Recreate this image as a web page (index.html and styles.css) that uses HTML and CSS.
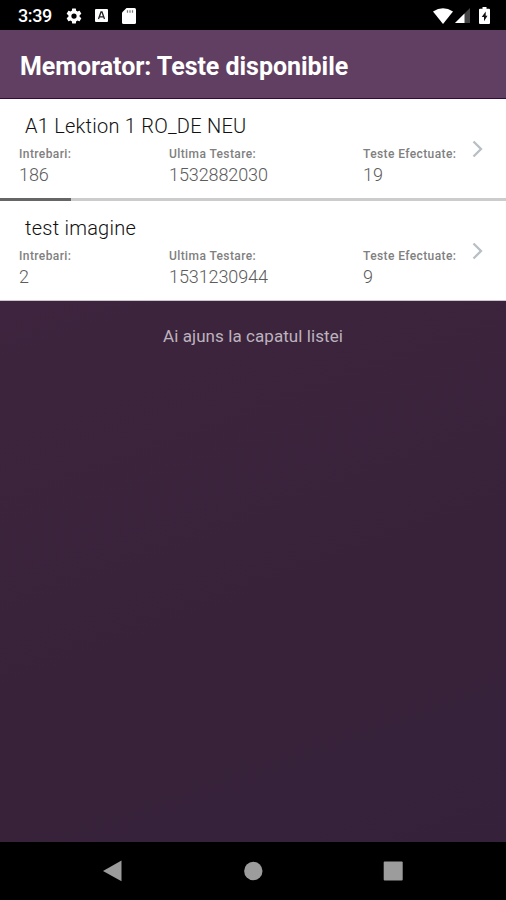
FILE: index.html
```html
<!DOCTYPE html>
<html lang="ro">
<head>
<meta charset="utf-8">
<title>Memorator</title>
<link rel="stylesheet" href="styles.css">
</head>
<body>
<div class="status">
  <span class="clock">3:39</span>
  <svg class="gear" width="18" height="18" viewBox="0 0 24 24"><path fill="#fff" fill-rule="evenodd" d="M19.43 12.98c.04-.32.07-.64.07-.98s-.03-.66-.07-.98l2.11-1.65c.19-.15.24-.42.12-.64l-2-3.46c-.12-.22-.39-.3-.61-.22l-2.49 1c-.52-.4-1.08-.73-1.69-.98l-.38-2.65A.49.49 0 0 0 14 2h-4c-.25 0-.46.18-.49.42l-.38 2.65c-.61.25-1.17.59-1.69.98l-2.49-1c-.23-.09-.49 0-.61.22l-2 3.46c-.13.22-.07.49.12.64l2.11 1.65c-.04.32-.07.65-.07.98s.03.66.07.98l-2.11 1.65c-.19.15-.24.42-.12.64l2 3.46c.12.22.39.3.61.22l2.49-1c.52.4 1.08.73 1.69.98l.38 2.65c.03.24.24.42.49.42h4c.25 0 .46-.18.49-.42l.38-2.65c.61-.25 1.17-.59 1.69-.98l2.49 1c.23.09.49 0 .61-.22l2-3.46c.12-.22.07-.49-.12-.64zM12 15.5a3.5 3.5 0 1 1 0-7 3.5 3.5 0 0 1 0 7z"/></svg>
  <svg class="keyboard" width="13" height="13" viewBox="0 0 13 13"><rect width="13" height="13" rx="1" fill="#fff"/><path d="M3.500 10 6 3h1l2.500 7M4.500 7.800h4" fill="none" stroke="#222" stroke-width="1.300"/></svg>
  <svg class="card" width="14" height="16" viewBox="0 0 14 16"><path fill="#fff" d="M4.500 0H12.500Q14 0 14 1.500V14.500Q14 16 12.500 16H1.500Q0 16 0 14.500V4.500z"/><path d="M5.500 2.200v2.500M8 2.200v2.500M10.500 2.200v2.500" stroke="#777" stroke-width="1.200"/></svg>
  <span class="spacer"></span>
  <svg class="wifi" width="20" height="16" viewBox="0 0 20 16"><path fill="#fff" d="M0 3.500Q10-3 20 3.500L10 16z"/></svg>
  <svg class="signal" width="15" height="15" viewBox="0 0 15 15"><path fill="#444" d="M15 0v15H0z"/><path fill="#fff" d="M9.500 5.500V15H0z"/></svg>
  <svg class="battery" width="11" height="17" viewBox="0 0 11 17"><path fill="#fff" d="M3.500 0h4v1.800H10q1 0 1 1V16q0 1-1 1H1q-1 0-1-1V2.800q0-1 1-1h2.500z"/><path fill="#111" d="M6.700 4.500 2.700 10H5v4.200l3.500-5.500H6.700z"/></svg>
</div>
<header class="header">Memorator: Teste disponibile</header>
<main class="list">
  <article class="row">
    <h2 class="title">A1 Lektion 1 RO_DE NEU</h2>
    <div class="stats">
      <div><div class="label">Intrebari:</div><div class="value">186</div></div>
      <div><div class="label">Ultima Testare:</div><div class="value">1532882030</div></div>
      <div><div class="label">Teste Efectuate:</div><div class="value">19</div></div>
    </div>
    <svg class="chevron" width="11" height="18" viewBox="0 0 11 18"><path d="M1.500 1.500 9 9l-7.500 7.500" fill="none" stroke="#b8bfc5" stroke-width="2.300"/></svg>
    <div class="progress"><div class="bar"></div></div>
  </article>
  <article class="row last">
    <h2 class="title">test imagine</h2>
    <div class="stats">
      <div><div class="label">Intrebari:</div><div class="value">2</div></div>
      <div><div class="label">Ultima Testare:</div><div class="value">1531230944</div></div>
      <div><div class="label">Teste Efectuate:</div><div class="value">9</div></div>
    </div>
    <svg class="chevron" width="11" height="18" viewBox="0 0 11 18"><path d="M1.500 1.500 9 9l-7.500 7.500" fill="none" stroke="#b8bfc5" stroke-width="2.300"/></svg>
  </article>
  <p class="end">Ai ajuns la capatul listei</p>
</main>
<nav class="nav">
  <svg width="20" height="22" viewBox="0 0 20 22"><path fill="#9c9c9c" d="M18.500 .5v20.800L0 11z"/></svg>
  <svg width="20" height="20" viewBox="0 0 20 20"><circle cx="10.300" cy="10" r="9.200" fill="#9c9c9c"/></svg>
  <svg width="20" height="20" viewBox="0 0 20 20"><rect x=".7" y=".5" width="19" height="19" rx="1" fill="#9c9c9c"/></svg>
</nav>
</body>
</html>
```
FILE: styles.css
```css
* { box-sizing: border-box; }
body {
  margin: 0;
  height: 900px;
  display: flex;
  flex-direction: column;
  font-family: Roboto, "Liberation Sans", sans-serif;
  background: #000;
  overflow: hidden;
}
.status {
  height: 30px;
  display: flex;
  align-items: center;
  padding: 1px 16px 0 18px;
  color: #fff;
}
.clock {
  width: 47px;
  font-size: 18px;
  font-weight: 500;
  line-height: 30px;
  letter-spacing: -0.4px;
}
.keyboard { margin-left: 12px; }
.card { margin-left: 14px; }
.spacer { flex: 1; }
.signal { margin-left: 2px; }
.battery { margin-left: 9px; }
.header {
  height: 69px;
  padding: 3px 20px 0;
  background: #613f62;
  border-bottom: 1px solid #34083a;
  color: #fff;
  font-size: 25px;
  font-weight: 700;
  line-height: 68px;
  letter-spacing: -0.04px;
}
.list {
  flex: 1;
  background: linear-gradient(160deg, #42243f 0%, #3c243d 35%, #38223a 65%, #35223a 100%);
}
.row {
  position: relative;
  height: 102px;
  padding: 15px 0 0 19px;
  background: #fff;
}
.last { height: 100px; border-bottom: 1px solid #cfc5d0; }
.title {
  margin: 0 0 0 6px;
  font-size: 20px;
  font-weight: 300;
  line-height: 24px;
  color: #111;
  letter-spacing: 0.24px;
}
.stats {
  display: grid;
  grid-template-columns: 150px 194px 120px;
  margin-top: 8px;
}
.label {
  font-size: 12px;
  font-weight: 500;
  line-height: 16px;
  color: #808080;
  letter-spacing: 0.4px;
}
.value {
  padding-top: 1px;
  font-size: 18px;
  font-weight: 300;
  line-height: 24px;
  color: #5c5c5c;
  letter-spacing: -0.1px;
}
.chevron { position: absolute; left: 472px; top: 41px; }
.progress {
  position: absolute;
  left: 0;
  right: 0;
  bottom: 0;
  height: 3px;
  background: #ccc;
}
.bar { width: 71px; height: 3px; background: #666; }
.end {
  margin: 23px 0 0;
  text-align: center;
  font-size: 17px;
  line-height: 24px;
  color: #bdb3be;
  letter-spacing: 0.07px;
}
.nav {
  height: 58px;
  display: flex;
  align-items: center;
  justify-content: center;
  gap: 120px;
}
```
